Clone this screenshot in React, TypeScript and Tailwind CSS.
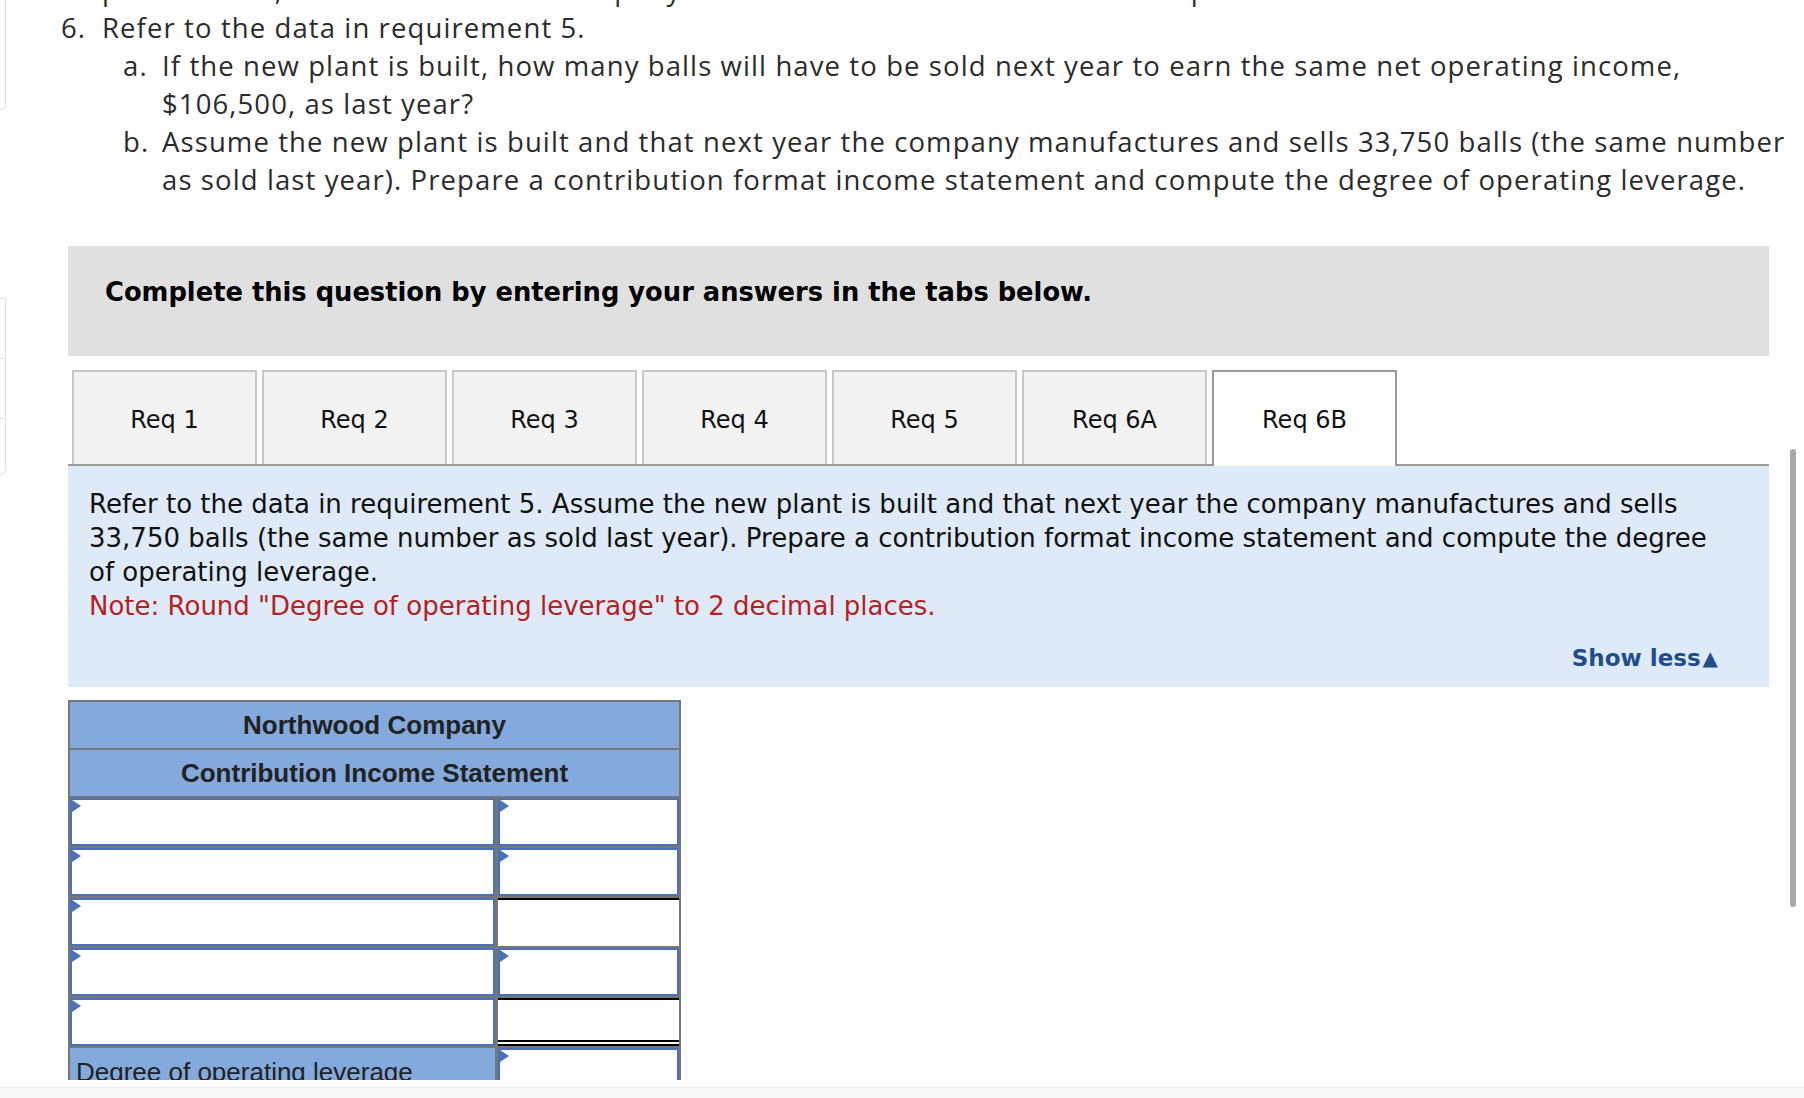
import React from 'react';

const TABS = ['Req 1', 'Req 2', 'Req 3', 'Req 4', 'Req 5', 'Req 6A', 'Req 6B'];
const ACTIVE_TAB = 'Req 6B';

const verdana = { fontFamily: '"DejaVu Sans", Verdana, sans-serif' };

function Arrow() {
    return (
        <span className="absolute left-0 top-0 h-0 w-0 border-y-[6px] border-l-[9px] border-y-transparent border-l-[#4a72b8]" />
    );
}

function InputCell({ arrow = true }: { arrow?: boolean }) {
    return (
        <div className="relative h-full border-2 border-[#4a72b8] bg-white">
            {arrow && <Arrow />}
        </div>
    );
}

function TotalCell({ double = false }: { double?: boolean }) {
    return (
        <div
            className={`h-full border-t-2 border-black bg-white ${double ? 'border-b-[6px] border-double' : ''}`}
        />
    );
}

export default function App(): JSX.Element {
    return (
        <div className="relative flex h-[1098px] w-[1804px] flex-col overflow-hidden bg-white">
            <div className="flex h-[1080px] shrink-0 overflow-hidden">
                {/* sidebar remnants at the very left edge */}
                <aside className="w-[6px] shrink-0">
                    <div className="h-[110px] rounded-br-[8px] border-b border-r border-[#e2e2e2]" />
                    <div className="mt-[188px] flex h-[177px] flex-col rounded-br-[8px] border-y border-r border-[#e2e2e2]">
                        <div className="h-[60px] border-b border-[#e2e2e2]" />
                        <div className="h-[60px] border-b border-[#e2e2e2]" />
                        <div className="flex-1" />
                    </div>
                </aside>

                <main className="flex-1">
                    {/* question text */}
                    <div
                        className="-mt-[29px] pl-[55px] text-[27.5px] leading-[38px] tracking-[1.1px] text-[#2b2b2b]"
                        style={{ fontFamily: '"Open Sans", Lato, sans-serif' }}
                    >
                        <div className="pl-[41px] whitespace-nowrap">
                            plant is built, what would be the company&apos;s new CM ratio and new break-even point in balls and in dollar sales?
                        </div>
                        <div className="flex">
                            <span className="w-[41px] shrink-0">6.</span>
                            <div>
                                <div>Refer to the data in requirement 5.</div>
                                <div className="ml-[21px] flex">
                                    <span className="w-[39px] shrink-0">a.</span>
                                    <div>
                                        <div className="whitespace-nowrap">If the new plant is built, how many balls will have to be sold next year to earn the same net operating income,</div>
                                        <div>$106,500, as last year?</div>
                                    </div>
                                </div>
                                <div className="ml-[21px] flex">
                                    <span className="w-[39px] shrink-0">b.</span>
                                    <div>
                                        <div className="whitespace-nowrap">Assume the new plant is built and that next year the company manufactures and sells 33,750 balls (the same number</div>
                                        <div className="whitespace-nowrap">as sold last year). Prepare a contribution format income statement and compute the degree of operating leverage.</div>
                                    </div>
                                </div>
                            </div>
                        </div>
                    </div>

                    <div className="ml-[62px] w-[1701px]" style={verdana}>
                        {/* instructions */}
                        <div className="mt-[47px] h-[110px] bg-[#e0e0e0] px-[37px] pt-[31px] text-[25.75px] font-bold leading-[30px] text-black">
                            Complete this question by entering your answers in the tabs below.
                        </div>

                        {/* tabs */}
                        <div className="mt-[14px] flex gap-[5px] border-b-2 border-[#9a9a9a] pl-[4px]">
                            {TABS.map((tab) =>
                                tab === ACTIVE_TAB ? (
                                    <div
                                        key={tab}
                                        className="-mb-[2px] flex h-[96px] w-[185px] items-center justify-center border-2 border-b-0 border-[#9a9a9a] bg-white pt-[2px] text-[24px] text-[#111]"
                                    >
                                        {tab}
                                    </div>
                                ) : (
                                    <div
                                        key={tab}
                                        className="flex h-[94px] w-[185px] items-center justify-center border-2 border-b-0 border-[#c8c8c8] bg-[#f2f2f2] pt-[4px] text-[24px] text-[#111]"
                                    >
                                        {tab}
                                    </div>
                                )
                            )}
                        </div>

                        {/* requirement panel */}
                        <div className="h-[221px] bg-[#deeaf7] pl-[21px] pr-[34px] pt-[21px] text-[26px] leading-[34px] text-[#111]">
                            <p>
                                Refer to the data in requirement 5. Assume the new plant is built and that next year the company manufactures and sells 33,750 balls (the same number as sold last year). Prepare a contribution format income statement and compute the degree of operating leverage.
                            </p>
                            <p className="text-[#b22222]">Note: Round &quot;Degree of operating leverage&quot; to 2 decimal places.</p>
                            <div className="mt-[20px] flex justify-end pr-[17px] text-[23px] font-bold leading-[30px] text-[#1f4e8c]">
                                Show less<span className="ml-[2px] text-[20px]">▲</span>
                            </div>
                        </div>
                    </div>

                    {/* worksheet */}
                    <div
                        className="ml-[62px] mt-[13px] w-[613px] border-x-2 border-t-2 border-[#777] bg-[#777]"
                        style={{ fontFamily: '"Liberation Sans", Arial, sans-serif' }}
                    >
                        <div className="flex flex-col gap-[2px]">
                            <div className="flex h-[46px] items-center justify-center bg-[#83a9dd] text-[26px] font-bold text-[#222]">
                                Northwood Company
                            </div>
                            <div className="flex h-[46px] items-center justify-center bg-[#83a9dd] text-[26px] font-bold text-[#222]">
                                Contribution Income Statement
                            </div>
                            <div className="grid h-[48px] grid-cols-[425px_1fr] gap-x-[3px]">
                                <InputCell />
                                <InputCell />
                            </div>
                            <div className="grid h-[48px] grid-cols-[425px_1fr] gap-x-[3px]">
                                <InputCell />
                                <InputCell />
                            </div>
                            <div className="grid h-[48px] grid-cols-[425px_1fr] gap-x-[3px]">
                                <InputCell />
                                <TotalCell />
                            </div>
                            <div className="grid h-[48px] grid-cols-[425px_1fr] gap-x-[3px]">
                                <InputCell />
                                <InputCell />
                            </div>
                            <div className="grid h-[48px] grid-cols-[425px_1fr] gap-x-[3px]">
                                <InputCell />
                                <TotalCell double />
                            </div>
                            <div className="grid h-[48px] grid-cols-[425px_1fr] gap-x-[3px]">
                                <div className="bg-[#83a9dd] pl-[6px] pt-[9px] text-[26px] leading-[30px] text-[#222]">
                                    Degree of operating leverage
                                </div>
                                <InputCell />
                            </div>
                        </div>
                    </div>
                </main>
            </div>

            <div className="h-[7px] shrink-0 bg-white" />
            <div className="flex-1 border-t border-[#ebebeb] bg-[#f8f8f8]" />

            {/* scrollbar thumb */}
            <div className="absolute right-[8px] top-[449px] h-[458px] w-[6px] rounded-full bg-[#a8a8a8]" />
        </div>
    );
}
